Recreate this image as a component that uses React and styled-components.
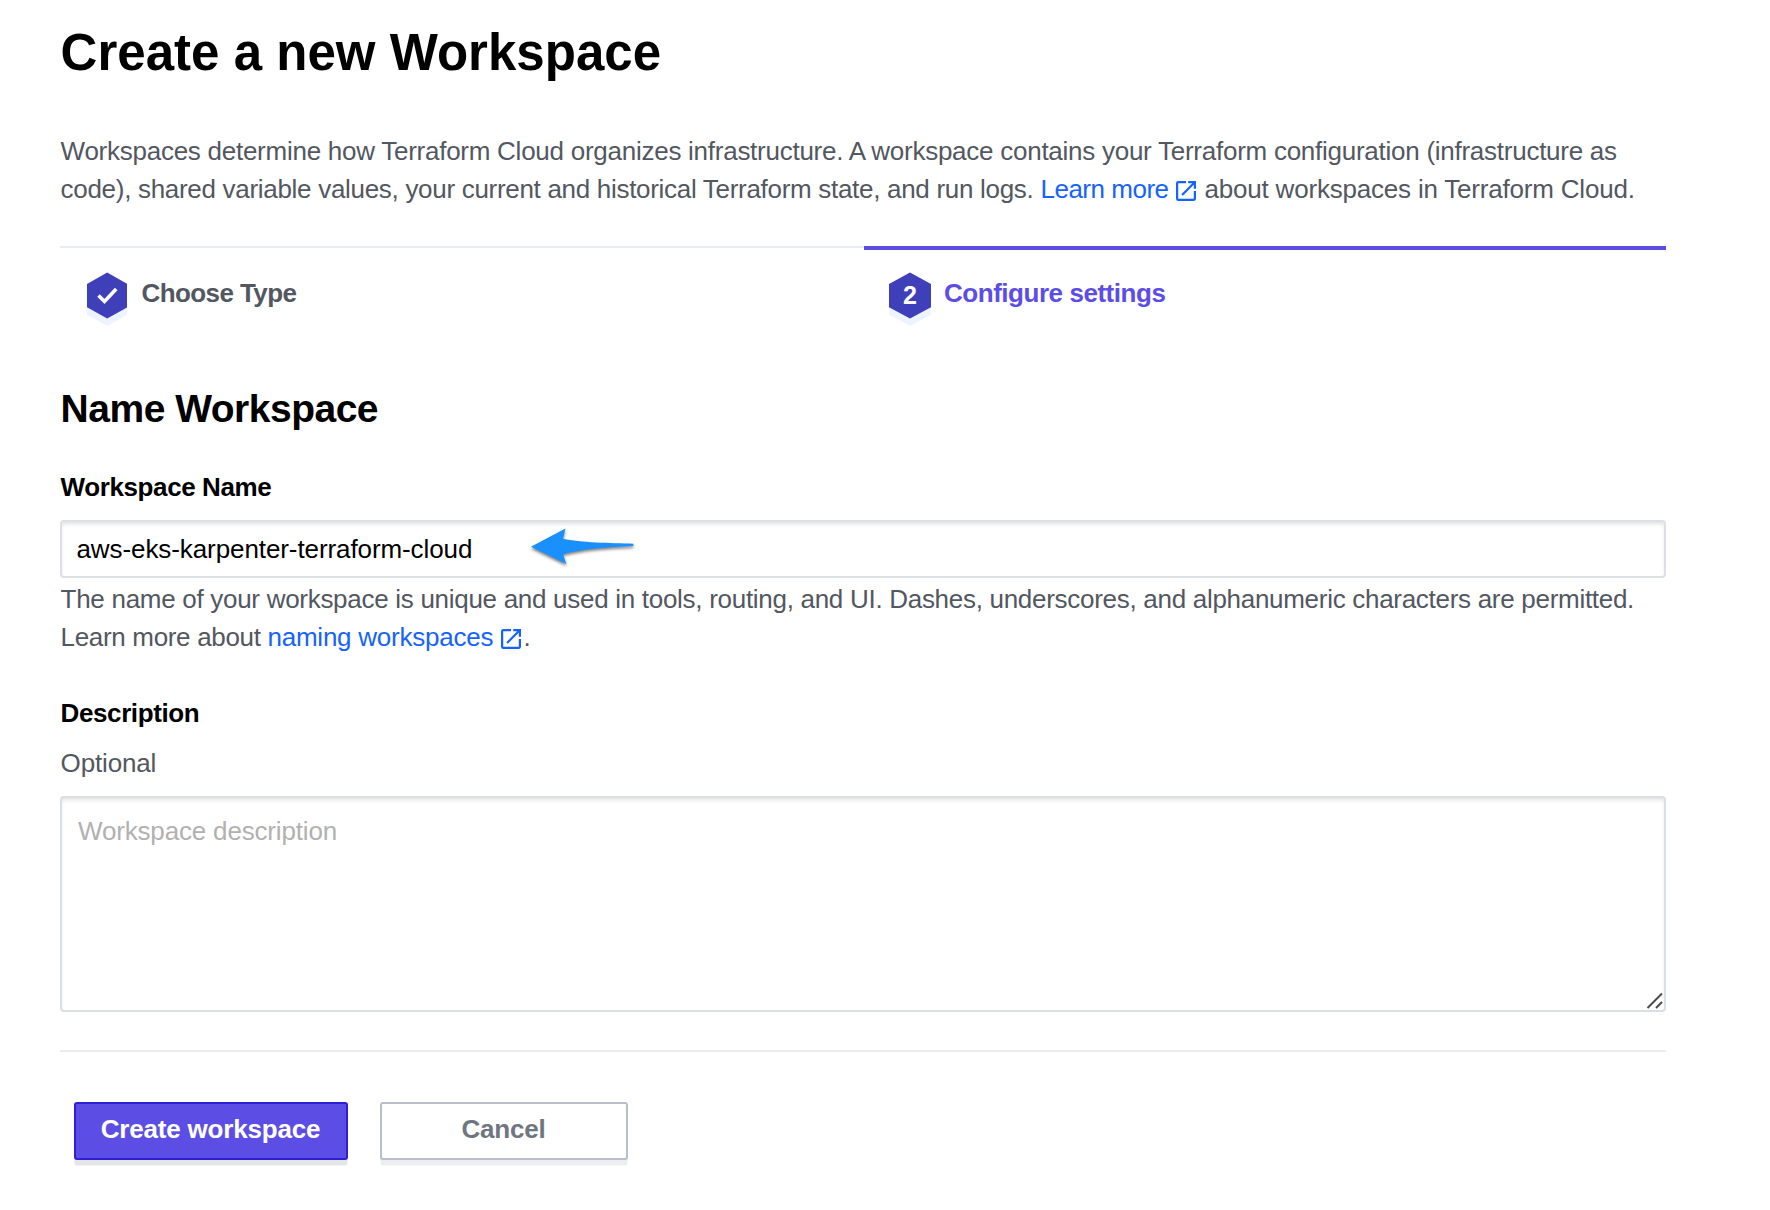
import React from 'react';
import styled, { createGlobalStyle } from 'styled-components';

const GlobalStyle = createGlobalStyle`
  *, *::before, *::after { box-sizing: border-box; }
  body {
    margin: 0;
    background: #fff;
    color: #000;
    font-family: "Liberation Sans", Arial, sans-serif;
    font-size: 26px;
    line-height: 38px;
  }
`;

const Page = styled.main`
  display: flex;
  flex-direction: column;
  width: 1666px;
  min-height: 1210px;
  padding: 23px 0 0 60px;
`;

const Title = styled.h1`
  margin: 0;
  padding-left: 0.6px;
  font-size: 51px;
  line-height: 60px;
  letter-spacing: 0.02px;
`;

const Text = styled.p`
  margin: ${(p) => p.$top || 0}px 0 0;
  padding-left: 0.6px;
  color: #525761;
  white-space: nowrap;
  letter-spacing: -0.29px;
`;

const Run = styled.span`
  letter-spacing: ${(p) => p.$track}px;
`;

const Link = styled.a`
  color: #1563ff;
  text-decoration: none;
  letter-spacing: ${(p) => p.$track}px;
`;

const LinkIcon = styled.svg`
  width: 20px;
  height: 20px;
  margin-left: ${(p) => p.$before}px;
  margin-right: ${(p) => p.$after}px;
  vertical-align: -2.6px;
  fill: currentColor;
`;

const Steps = styled.nav`
  display: grid;
  grid-template-columns: 804px 802px;
  margin-top: 38px;
`;

const Step = styled.div`
  display: flex;
  align-items: flex-start;
  height: 90px;
  padding: ${(p) => (p.$active ? '22px 0 0 25px' : '24px 0 0 27px')};
  border-top: ${(p) => (p.$active ? '4px solid #5c4ee5' : '2px solid #e9edf2')};
  color: ${(p) => (p.$active ? '#5c4ee5' : '#525761')};
`;

const Badge = styled.svg`
  flex: none;
  width: ${(p) => p.$w}px;
  height: 56px;
`;

const StepLabel = styled.span`
  margin: 2px 0 0 ${(p) => p.$gap}px;
  font-weight: bold;
  letter-spacing: ${(p) => p.$track}px;
`;

const Heading = styled.h2`
  margin: 51px 0 0;
  padding-left: 0.6px;
  font-size: 39px;
  line-height: 44px;
  letter-spacing: -0.5px;
`;

const Label = styled.label`
  display: block;
  margin-top: ${(p) => p.$top}px;
  padding-left: 0.6px;
  font-weight: bold;
  letter-spacing: -0.4px;
`;

const Field = styled.div`
  position: relative;
  display: flex;
  margin-top: 14px;
`;

const Input = styled.input`
  width: 100%;
  height: 58px;
  padding: 0 14.5px;
  border: 2px solid #dcdfe6;
  border-radius: 4px;
  box-shadow: inset 0 3px 4px -1px rgba(0, 0, 0, 0.12);
  background: #fff;
  color: #000;
  font: inherit;
  letter-spacing: -0.09px;
  outline: none;
`;

const TextArea = styled.textarea`
  width: 100%;
  height: 216px;
  padding: 14px 16px;
  border: 2px solid #dadfe4;
  border-radius: 4px;
  box-shadow: inset 0 3px 4px -1px rgba(0, 0, 0, 0.12);
  background: #fff;
  font: inherit;
  letter-spacing: -0.17px;
  resize: none;
  outline: none;
  &::placeholder { color: #b1b1b1; opacity: 1; }
`;

const Arrow = styled.svg`
  position: absolute;
  left: 465px;
  top: 0;
  width: 120px;
  height: 56px;
  pointer-events: none;
  filter: drop-shadow(0 2px 1.5px rgba(0, 0, 0, 0.5));
`;

const Grip = styled.svg`
  position: absolute;
  right: 2px;
  bottom: 2px;
  width: 18px;
  height: 18px;
  pointer-events: none;
`;

const Divider = styled.hr`
  width: 100%;
  height: 2px;
  margin: 38px 0 0;
  border: 0;
  background: #ebecf1;
`;

const Actions = styled.div`
  display: flex;
  gap: 32px;
  margin-top: 50px;
  padding-left: 14px;
`;

const Button = styled.button`
  width: ${(p) => (p.$primary ? 274 : 248)}px;
  height: 58px;
  padding: 0 1px 4px 0;
  border: 2px solid ${(p) => (p.$primary ? '#2e20d6' : '#b9bdcc')};
  border-radius: 3px;
  box-shadow: 0 6px 0 -0.5px ${(p) => (p.$primary ? '#e5e6ea' : '#eeeef1')};
  background: ${(p) => (p.$primary ? '#5c4ee5' : '#fff')};
  color: ${(p) => (p.$primary ? '#fff' : '#6f7682')};
  font: bold 26px/50px "Liberation Sans", Arial, sans-serif;
  letter-spacing: -0.18px;
`;

function ExternalIcon({ before, after }) {
  return (
    <LinkIcon $before={before} $after={after} viewBox="3 3 18 18" aria-hidden="true">
      <path d="M19 19H5V5h7V3H5a2 2 0 0 0-2 2v14a2 2 0 0 0 2 2h14c1.1 0 2-.9 2-2v-7h-2v7zM14 3v2h3.59l-9.83 9.83 1.41 1.41L19 6.41V10h2V3h-7z" />
    </LinkIcon>
  );
}

function Hexagon({ w, children }) {
  const shape = (y) =>
    `${w / 2},${y} ${w},${y + 11.3} ${w},${y + 34.7} ${w / 2},${y + 46} 0,${y + 34.7} 0,${y + 11.3}`;
  return (
    <Badge $w={w} viewBox={`0 0 ${w} 56`}>
      <polygon points={shape(8)} fill="#eef4ff" />
      <polygon points={shape(0.6)} fill="#3f3fb9" />
      {children}
    </Badge>
  );
}

export default function App() {
  return (
    <>
      <GlobalStyle />
      <Page>
        <Title>Create a new Workspace</Title>
        <Text $top={49}>
          <Run $track={-0.258}>
            Workspaces determine how Terraform Cloud organizes infrastructure. A workspace contains your Terraform
            configuration (infrastructure as
          </Run>
          <br />
          <Run $track={-0.3}>
            code), shared variable values, your current and historical Terraform state, and run logs.
          </Run>{' '}
          <Link $track={-0.48}>
            Learn more
            <ExternalIcon before={7.4} after={1.6} />
          </Link>{' '}
          <Run $track={-0.2}>about workspaces in Terraform Cloud.</Run>
        </Text>

        <Steps>
          <Step>
            <Hexagon w={40.4}>
              <path d="M11.5 23.5l6 6L29.2 17" fill="none" stroke="#fff" strokeWidth="3.6" />
            </Hexagon>
            <StepLabel $gap={14.2} $track={-0.6}>Choose Type</StepLabel>
          </Step>
          <Step $active>
            <Hexagon w={42}>
              <text x="21" y="31.6" fill="#fff" fontSize="25" fontWeight="bold" textAnchor="middle">2</text>
            </Hexagon>
            <StepLabel $gap={13} $track={-0.46}>Configure settings</StepLabel>
          </Step>
        </Steps>

        <Heading>Name Workspace</Heading>

        <Label htmlFor="name" $top={37}>Workspace Name</Label>
        <Field>
          <Input id="name" defaultValue="aws-eks-karpenter-terraform-cloud" />
          <Arrow viewBox="525 520 120 56">
            <path
              d="M531 546.8L565.4 528.5L563 538.7C580 542.5 610 543 633.4 543.7V546C610 547 580 549 563 554.3L566.4 564Z"
              fill="#1a90ff"
            />
          </Arrow>
        </Field>
        <Text $top={2}>
          The name of your workspace is unique and used in tools, routing, and UI. Dashes, underscores, and
          alphanumeric characters are permitted.
          <br />
          <Run $track={-0.33}>Learn more about</Run>{' '}
          <Link $track={-0.24}>
            naming workspaces
            <ExternalIcon before={8} after={2.4} />
          </Link>
          .
        </Text>

        <Label htmlFor="description" $top={38}>Description</Label>
        <Text $top={12}>
          <Run $track={-0.16}>Optional</Run>
        </Text>
        <Field>
          <TextArea id="description" placeholder="Workspace description" />
          <Grip viewBox="0 0 18 18">
            <path d="M1.5 16L16 1.5M10 16L16 10" stroke="#4a4a4a" strokeWidth="2" fill="none" />
          </Grip>
        </Field>

        <Divider />

        <Actions>
          <Button $primary>Create workspace</Button>
          <Button>Cancel</Button>
        </Actions>
      </Page>
    </>
  );
}
